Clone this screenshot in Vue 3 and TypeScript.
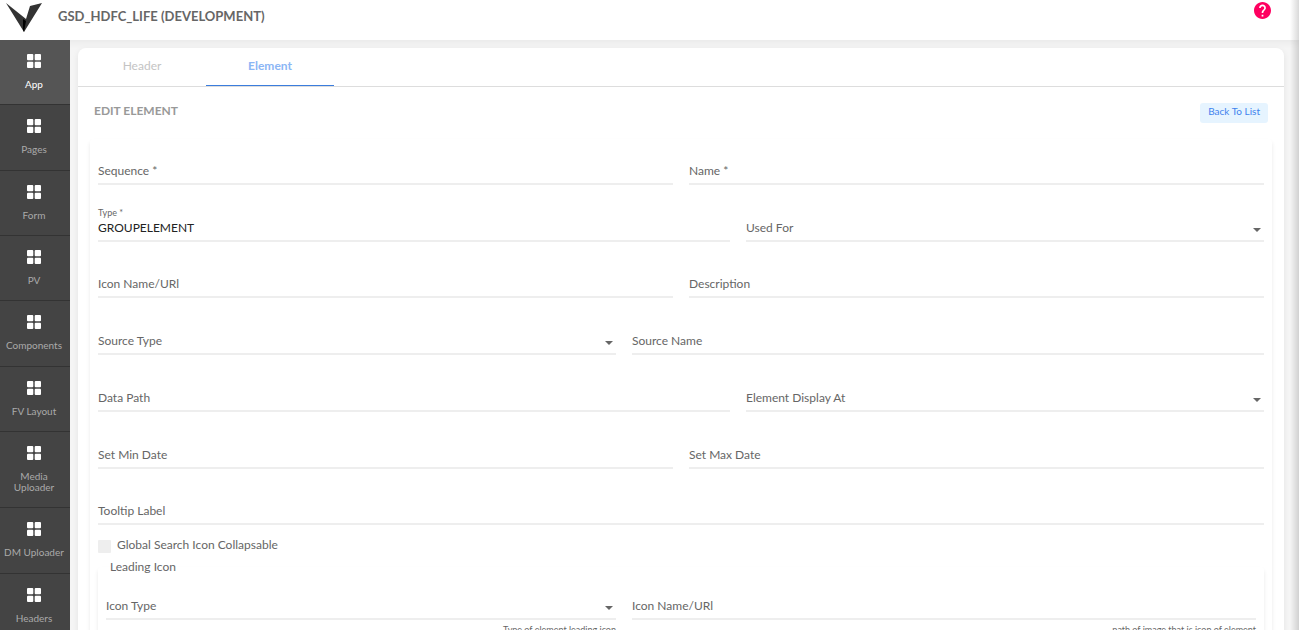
<script setup lang="ts">
import { ref } from 'vue'

interface Field {
  id: string
  label: string
  kind: 'input' | 'select'
  value?: string
  hint?: string
}

const menu = ['App', 'Pages', 'Form', 'PV', 'Components', 'FV Layout', 'Media Uploader', 'DM Uploader', 'Headers']
const activeMenu = ref('App')
const tabs = ['Header', 'Element']
const activeTab = ref('Element')

const rows = ref<Field[][]>([
  [
    { id: 'sequence', label: 'Sequence *', kind: 'input' },
    { id: 'name', label: 'Name *', kind: 'input' },
  ],
  [
    { id: 'type', label: 'Type *', kind: 'input', value: 'GROUPELEMENT' },
    { id: 'used-for', label: 'Used For', kind: 'select' },
  ],
  [
    { id: 'icon-name', label: 'Icon Name/URl', kind: 'input' },
    { id: 'description', label: 'Description', kind: 'input' },
  ],
  [
    { id: 'source-type', label: 'Source Type', kind: 'select' },
    { id: 'source-name', label: 'Source Name', kind: 'input' },
  ],
  [
    { id: 'data-path', label: 'Data Path', kind: 'input' },
    { id: 'display-at', label: 'Element Display At', kind: 'select' },
  ],
  [
    { id: 'min-date', label: 'Set Min Date', kind: 'input' },
    { id: 'max-date', label: 'Set Max Date', kind: 'input' },
  ],
  [{ id: 'tooltip', label: 'Tooltip Label', kind: 'input' }],
])

const leading = ref<Field[]>([
  { id: 'leading-type', label: 'Icon Type', kind: 'select', hint: 'Type of element leading icon' },
  { id: 'leading-name', label: 'Icon Name/URl', kind: 'input', hint: 'path of image that is icon of element' },
])
const collapsable = ref(false)
</script>

<template>
  <div class="app">
    <header class="topbar">
      <svg class="logo" viewBox="0 0 36 30" aria-hidden="true">
        <path d="M0 1 L20 17 L24 4 L36 1 L18 30 Z" fill="#333" />
        <path d="M17 17 L20 19 L18 30 L17 28 Z" fill="#000" />
      </svg>
      <h1 class="title">GSD_HDFC_LIFE (DEVELOPMENT)</h1>
      <button class="help" type="button" aria-label="Help">
        <svg viewBox="2 2 20 20" aria-hidden="true">
          <path fill="#ff0060" d="M12 2C6.48 2 2 6.48 2 12s4.48 10 10 10 10-4.480 10-10S17.520 2 12 2zm1 17h-2v-2h2v2zm2.070-7.750-.9.920C13.450 12.900 13 13.500 13 15h-2v-.5c0-1.100.450-2.100 1.170-2.830l1.240-1.260c.370-.360.590-.860.590-1.410 0-1.100-.9-2-2-2s-2 .9-2 2H8c0-2.210 1.790-4 4-4s4 1.790 4 4c0 .880-.360 1.680-.930 2.250z" />
        </svg>
      </button>
    </header>

    <div class="body">
      <nav class="sidebar">
        <div class="menu">
          <button
            v-for="item in menu"
            :key="item"
            type="button"
            class="menu-item"
            :class="{ active: item === activeMenu }"
            @click="activeMenu = item"
          >
            <svg class="grid-icon" viewBox="0 0 14 14" aria-hidden="true">
              <rect x="0" y="0" width="6.300" height="6.300" rx="1" />
              <rect x="7.700" y="0" width="6.300" height="6.300" rx="1" />
              <rect x="0" y="7.700" width="6.300" height="6.300" rx="1" />
              <rect x="7.700" y="7.700" width="6.300" height="6.300" rx="1" />
            </svg>
            <span>{{ item }}</span>
          </button>
        </div>
      </nav>

      <main class="content">
        <section class="card">
          <div class="tabs" role="tablist">
            <button
              v-for="tab in tabs"
              :key="tab"
              type="button"
              role="tab"
              class="tab"
              :class="{ active: tab === activeTab }"
              :aria-selected="tab === activeTab"
              @click="activeTab = tab"
            >
              {{ tab }}
            </button>
          </div>

          <div class="heading">
            <h2>EDIT ELEMENT</h2>
            <button type="button" class="back">Back To List</button>
          </div>

          <form class="panel" @submit.prevent>
            <div class="rows">
              <div v-for="(row, i) in rows" :key="i" class="row">
                <div v-for="f in row" :key="f.id" class="field" :class="[f.kind, { filled: f.value }]">
                  <label :for="f.id">{{ f.label }}</label>
                  <input v-if="f.kind === 'input'" :id="f.id" v-model="f.value" type="text" />
                  <template v-else>
                    <select :id="f.id" v-model="f.value"></select>
                    <svg class="arrow" viewBox="0 0 8 4" aria-hidden="true"><path d="M0 0H8L4 4Z" /></svg>
                  </template>
                </div>
              </div>
            </div>

            <div class="check">
              <input id="collapsable" v-model="collapsable" type="checkbox" />
              <label for="collapsable">Global Search Icon Collapsable</label>
            </div>

            <fieldset class="group">
              <legend>Leading Icon</legend>
              <div class="row">
                <div v-for="f in leading" :key="f.id" class="field" :class="f.kind">
                  <label :for="f.id">{{ f.label }}</label>
                  <input v-if="f.kind === 'input'" :id="f.id" v-model="f.value" type="text" />
                  <template v-else>
                    <select :id="f.id" v-model="f.value"></select>
                    <svg class="arrow" viewBox="0 0 8 4" aria-hidden="true"><path d="M0 0H8L4 4Z" /></svg>
                  </template>
                  <small class="hint">{{ f.hint }}</small>
                </div>
              </div>
            </fieldset>
          </form>
        </section>
      </main>
    </div>
    <div class="edge"></div>
  </div>
</template>

<style>
html,
body {
  height: 100%;
  overflow: hidden;
}
#app {
  height: 100%;
}
</style>

<style scoped>
.app {
  position: relative;
  display: flex;
  flex-direction: column;
  height: 100vh;
  overflow: hidden;
  background: #f5f5f5;
  color: #666;
  font-family: Lato, 'Liberation Sans', sans-serif;
  font-size: 12px;
  line-height: 16px;
}
.app *,
.app *::before {
  box-sizing: border-box;
}
button,
input,
select {
  margin: 0;
  padding: 0;
  border: 0;
  border-radius: 0;
  background: none;
  font: inherit;
  color: inherit;
  outline: none;
}
.topbar {
  display: flex;
  flex: none;
  align-items: flex-start;
  height: 40px;
  padding: 2px 28px 0 6px;
  background: #fff;
  box-shadow: 0 2px 8px rgba(0, 0, 0, 0.06);
}
.logo {
  width: 36px;
  height: 30px;
}
.title {
  flex: 1;
  margin: 5px 0 0 16px;
  font-size: 13px;
  font-weight: 700;
  line-height: 18px;
}
.help {
  width: 17px;
  height: 17px;
}
.help svg {
  display: block;
  width: 17px;
  height: 17px;
}
.body {
  display: flex;
  flex: 1;
  min-height: 0;
}
.sidebar {
  flex: none;
  width: 70px;
  overflow: hidden;
  background: #444;
}
.menu {
  display: flex;
  flex-direction: column;
  min-height: 599px;
}
.menu-item {
  display: flex;
  flex: 1 0 auto;
  flex-direction: column;
  align-items: center;
  gap: 11px;
  padding: 14px 4px 14px 2px;
  border-bottom: 1px solid #333;
  color: #aaa;
  font-size: 10px;
  line-height: 11px;
  text-align: center;
}
.menu-item.active {
  background: #555;
  color: #fff;
}
.grid-icon {
  width: 14px;
  height: 14px;
  fill: #fff;
}
.content {
  flex: 1;
  min-width: 0;
  padding: 8px 15px 0 8px;
}
.card {
  min-height: 100%;
  border-radius: 8px;
  background: #fff;
  box-shadow: 0 2px 6px rgba(0, 0, 0, 0.08);
}
.tabs {
  display: flex;
  height: 39px;
  border-bottom: 1px solid #ddd;
}
.tab {
  width: 128px;
  height: 38px;
  padding-bottom: 2px;
  border-bottom: 1px solid transparent;
  color: #c4c4c4;
}
.tab.active {
  border-color: #3b7ddd;
  color: #8bb6f5;
  font-weight: 700;
}
.heading {
  display: flex;
  align-items: flex-start;
  justify-content: space-between;
  height: 52px;
  padding: 16px 16px 0;
}
.heading h2 {
  margin: 0;
  color: #999;
  font-size: 12px;
  font-weight: 700;
}
.back {
  height: 20px;
  padding: 0 8px 4px;
  border-radius: 3px;
  background: #e6f4ff;
  color: #3f82ee;
  font-size: 10px;
}
.panel {
  margin: 0 12px;
  padding: 0 8px 16px;
  border-radius: 4px;
  box-shadow: 0 3px 4px rgba(0, 0, 0, 0.09);
}
.rows {
  display: grid;
  grid-auto-rows: 1fr;
  min-height: 397px;
}
.row {
  display: flex;
  gap: 16px;
}
.field {
  display: grid;
  flex: 1 1 180px;
  grid-template-columns: minmax(0, 1fr) 11px;
  align-content: start;
  padding-top: 9px;
}
.field.select {
  flex-basis: 66px;
}
.field label {
  z-index: 1;
  grid-area: 1 / 1;
  align-self: start;
  padding-top: 15px;
}
.field input,
.field select {
  grid-area: 1 / 1 / 2 / 3;
  width: 100%;
  height: 37px;
  padding: 12px 0 1px;
  border-bottom: 2px solid #eee;
}
.field select {
  appearance: none;
}
.field.filled label {
  padding-top: 3px;
  font-size: 9px;
  line-height: 10px;
}
.field.filled input {
  color: #222;
}
.arrow {
  grid-area: 1 / 2;
  align-self: end;
  width: 8px;
  height: 4px;
  margin-bottom: 10px;
  fill: #666;
  pointer-events: none;
}
.check {
  display: flex;
  align-items: flex-start;
  gap: 6px;
  padding-top: 1px;
}
.check input {
  width: 13px;
  height: 13px;
  margin-top: 3px;
  border-radius: 1px;
  background: #eee;
  appearance: none;
}
.check input:checked {
  background: #3b7ddd;
}
.group {
  min-width: 0;
  margin: 6px 0 0;
  padding: 0 8px 16px;
  border: 0;
  border-radius: 4px;
  box-shadow: 0 3px 4px rgba(0, 0, 0, 0.09);
}
.group legend {
  padding: 0 4px;
}
.group .field {
  padding-top: 8px;
}
.hint {
  grid-column: 1 / 3;
  padding-top: 4px;
  font-size: 9px;
  line-height: 12px;
  text-align: right;
}
.edge {
  position: absolute;
  inset: 0 0 0 auto;
  width: 9px;
  background: linear-gradient(to right, rgba(0, 0, 0, 0), rgba(0, 0, 0, 0.15));
  pointer-events: none;
}
</style>
